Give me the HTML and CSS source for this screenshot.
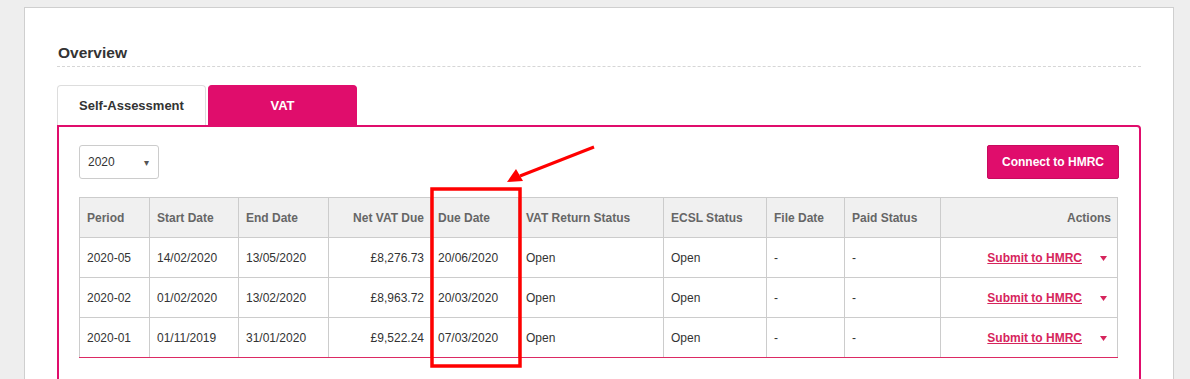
FILE: index.html
```html
<!DOCTYPE html>
<html lang="en">
<head>
	<meta charset="UTF-8">
	<title>Overview</title>
	<link rel="stylesheet" href="styles.css">
</head>
<body>
	<div class="panel">
		<h2 class="panel-title">Overview</h2>
		<div class="tabs">
			<button class="tab">Self-Assessment</button>
			<button class="tab tab-active">VAT</button>
		</div>
		<div class="tab-box">
			<div class="toolbar">
				<div class="year-select">
					<span>2020</span>
					<span class="caret">&#9662;</span>
				</div>
				<button class="btn-connect">Connect to HMRC</button>
			</div>
			<div class="table-wrap">
				<table class="vat-table">
					<colgroup>
						<col class="c-period">
						<col class="c-start">
						<col class="c-end">
						<col class="c-net">
						<col class="c-due">
						<col class="c-vat">
						<col class="c-ecsl">
						<col class="c-file">
						<col class="c-paid">
						<col class="c-actions">
					</colgroup>
					<thead>
						<tr>
							<th>Period</th>
							<th>Start Date</th>
							<th>End Date</th>
							<th class="num">Net VAT Due</th>
							<th>Due Date</th>
							<th>VAT Return Status</th>
							<th>ECSL Status</th>
							<th>File Date</th>
							<th>Paid Status</th>
							<th class="num">Actions</th>
						</tr>
					</thead>
					<tbody>
						<tr>
							<td>2020-05</td>
							<td>14/02/2020</td>
							<td>13/05/2020</td>
							<td class="num">&pound;8,276.73</td>
							<td>20/06/2020</td>
							<td>Open</td>
							<td>Open</td>
							<td>-</td>
							<td>-</td>
							<td class="actions"><a href="#" class="submit-link">Submit to HMRC</a><svg class="row-caret" width="7" height="5" viewBox="0 0 7 5"><polygon points="0,0 7,0 3.5,5" fill="#d6245c"/></svg></td>
						</tr>
						<tr>
							<td>2020-02</td>
							<td>01/02/2020</td>
							<td>13/02/2020</td>
							<td class="num">&pound;8,963.72</td>
							<td>20/03/2020</td>
							<td>Open</td>
							<td>Open</td>
							<td>-</td>
							<td>-</td>
							<td class="actions"><a href="#" class="submit-link">Submit to HMRC</a><svg class="row-caret" width="7" height="5" viewBox="0 0 7 5"><polygon points="0,0 7,0 3.5,5" fill="#d6245c"/></svg></td>
						</tr>
						<tr>
							<td>2020-01</td>
							<td>01/11/2019</td>
							<td>31/01/2020</td>
							<td class="num">&pound;9,522.24</td>
							<td>07/03/2020</td>
							<td>Open</td>
							<td>Open</td>
							<td>-</td>
							<td>-</td>
							<td class="actions"><a href="#" class="submit-link">Submit to HMRC</a><svg class="row-caret" width="7" height="5" viewBox="0 0 7 5"><polygon points="0,0 7,0 3.5,5" fill="#d6245c"/></svg></td>
						</tr>
					</tbody>
				</table>
			</div>
		</div>
	</div>
	<svg class="annotation" width="1190" height="379" viewBox="0 0 1190 379">
		<rect x="432" y="189" width="88" height="177" fill="none" stroke="#ff0000" stroke-width="3.5"/>
		<line x1="594" y1="147" x2="520" y2="176" stroke="#ff0000" stroke-width="3"/>
		<polygon points="507,182 516,169 523,181" fill="#ff0000"/>
	</svg>
</body>
</html>
```

FILE: styles.css
```css
body {
	margin: 0;
	background: #eeeeee;
	font-family: "Liberation Sans", Arial, sans-serif;
	color: #333;
	overflow: hidden;
}
.panel {
	margin: 7px 16px 0 24px;
	height: 400px;
	background: #fff;
	border: 1px solid #cfcfcf;
	padding: 36px 32px 0 32px;
}
.panel-title {
	margin: 0;
	font-size: 15.5px;
	line-height: 18px;
	font-weight: bold;
	color: #333;
	padding: 0 0 4px 1px;
	border-bottom: 1px dashed #d6d6d6;
}
.tabs {
	display: flex;
	gap: 2px;
	margin-top: 18px;
}
.tab {
	width: 149px;
	height: 40px;
	font-family: inherit;
	font-size: 13px;
	font-weight: bold;
	color: #333;
	background: #fff;
	border: 1px solid #ddd;
	border-bottom: none;
	border-radius: 4px 4px 0 0;
	padding: 0;
}
.tab-active {
	background: #e00d6c;
	border-color: #e00d6c;
	color: #fff;
}
.tab-box {
	border: 2px solid #e00d6c;
	border-radius: 0 4px 0 0;
	padding: 18px 20px 40px 20px;
}
.toolbar {
	display: flex;
	justify-content: space-between;
	align-items: center;
}
.year-select {
	box-sizing: border-box;
	width: 80px;
	height: 34px;
	border: 1px solid #ccc;
	border-radius: 3px;
	display: flex;
	justify-content: space-between;
	align-items: center;
	padding: 0 9px 0 8px;
	font-size: 12px;
	color: #333;
}
.year-select .caret {
	font-size: 10px;
	color: #555;
}
.btn-connect {
	width: 132px;
	height: 34px;
	background: #e00d6c;
	border: 1px solid #c80a5e;
	border-radius: 2px;
	color: #fff;
	font-family: inherit;
	font-size: 12px;
	font-weight: bold;
	padding: 0;
}
.table-wrap {
	margin-top: 18px;
	width: 1039px;
	border-bottom: 1px solid #dc2a64;
}
.vat-table {
	width: 100%;
	border-collapse: collapse;
	table-layout: fixed;
	font-size: 12px;
}
.vat-table th,
.vat-table td {
	border: 1px solid #ccc;
	height: 39px;
	padding: 0 7px;
	text-align: left;
	white-space: nowrap;
}
.vat-table tbody tr:last-child td {
	border-bottom: none;
	height: 39px;
}
.vat-table th {
	background: #f0f0f0;
	color: #666;
	font-weight: bold;
}
.vat-table td {
	color: #333;
}
.vat-table .num {
	text-align: right;
	padding-right: 6px;
}
.vat-table .actions {
	text-align: right;
	padding-right: 10px;
}
.c-period { width: 70px; }
.c-start { width: 89px; }
.c-end { width: 90px; }
.c-net { width: 102px; }
.c-due { width: 88px; }
.c-vat { width: 145px; }
.c-ecsl { width: 103px; }
.c-file { width: 78px; }
.c-paid { width: 96px; }
.c-actions { width: 177px; }
.submit-link {
	color: #d6245c;
	font-weight: bold;
	text-decoration: underline;
}
.row-caret {
	margin-left: 18px;
	vertical-align: 1px;
}
.annotation {
	position: absolute;
	top: 0;
	left: 0;
	pointer-events: none;
}
```
